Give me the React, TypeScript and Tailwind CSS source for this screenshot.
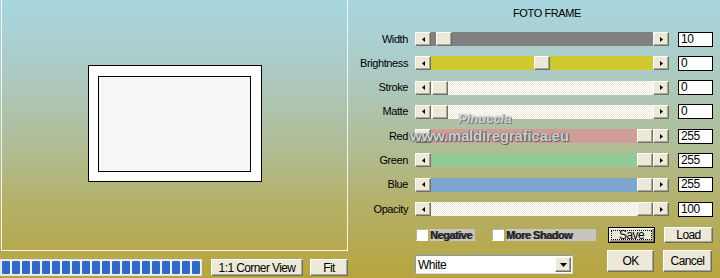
import React from 'react';

type Slider = {
  label: string;
  value: number;
  pos: number; // thumb offset in px along the 222px track
  track: string;
};

const sliders: Slider[] = [
  { label: 'Width', value: 10, pos: 5, track: 'bg-[#818181]' },
  { label: 'Brightness', value: 0, pos: 103, track: 'bg-[#cdc92f]' },
  { label: 'Stroke', value: 0, pos: 1, track: 'bg-[repeating-conic-gradient(#ece9d8_0_25%,#ffffff_0_50%)] bg-[length:2px_2px]' },
  { label: 'Matte', value: 0, pos: 1, track: 'bg-[repeating-conic-gradient(#ece9d8_0_25%,#ffffff_0_50%)] bg-[length:2px_2px]' },
  { label: 'Red', value: 255, pos: 206, track: 'bg-[#cf9c98]' },
  { label: 'Green', value: 255, pos: 206, track: 'bg-[#93c995]' },
  { label: 'Blue', value: 255, pos: 206, track: 'bg-[#7ca6cd]' },
  { label: 'Opacity', value: 100, pos: 206, track: 'bg-[repeating-conic-gradient(#ece9d8_0_25%,#ffffff_0_50%)] bg-[length:2px_2px]' },
];

const bevel =
  'bg-[#ece9d8] border border-t-white border-l-white border-r-[#716f64] border-b-[#716f64] shadow-[inset_-1px_-1px_0_#aca899]';

const ArrowBtn: React.FC<{ dir: 'left' | 'right' }> = ({ dir }) => (
  <div className={`w-[16px] h-[14px] shrink-0 flex items-center justify-center ${bevel}`}>
    <svg width="3" height="5" viewBox="0 0 3 5">
      {dir === 'left' ? <path d="M3 0 L0 2.5 L3 5 Z" fill="#000" /> : <path d="M0 0 L3 2.5 L0 5 Z" fill="#000" />}
    </svg>
  </div>
);

const Button: React.FC<{ label: string; className?: string; focused?: boolean }> = ({ label, className = '', focused }) => (
  <div
    className={`flex items-center justify-center text-[12px] tracking-[-0.6px] text-black ${
      focused
        ? 'bg-[#ece9d8] border border-black shadow-[inset_1px_1px_0_#ffffff,inset_-1px_-1px_0_#716f64,inset_-2px_-2px_0_#aca899] p-[3px]'
        : bevel
    } ${className}`}
  >
    {focused ? (
      <span className="w-full h-full flex items-center justify-center leading-none outline outline-1 outline-dotted outline-black">
        {label}
      </span>
    ) : (
      label
    )}
  </div>
);

const SliderRow: React.FC<{ s: Slider }> = ({ s }) => (
  <div className="flex items-center h-[14px]">
    <div className="w-[50px] text-right text-[11px] tracking-[-0.4px] leading-none text-black">{s.label}</div>
    <div className="ml-[7px] flex w-[254px]">
      <ArrowBtn dir="left" />
      <div className={`relative w-[222px] h-[14px] ${s.track}`}>
        <div className={`absolute top-0 w-[16px] h-[14px] ${bevel}`} style={{ left: s.pos }} />
      </div>
      <ArrowBtn dir="right" />
    </div>
    <div className="ml-[9px] w-[35px] h-[15px] bg-white border border-black pl-[2px] text-[12px] tracking-[-0.4px] leading-[13px] text-black">
      {s.value}
    </div>
  </div>
);

const Check: React.FC<{ label: string; w: string }> = ({ label, w }) => (
  <div className="flex items-center">
    <div className="w-[12px] h-[12px] bg-white border border-t-[#b9b6a6] border-l-[#b9b6a6] border-r-white border-b-white" />
    <div
      className={`ml-[2px] h-[12px] ${w} bg-[#c7c5bd] text-[11px] leading-[12px] font-bold tracking-[-0.5px] text-[#1e1e1e] [text-shadow:1px_0_0_#6b6b6b]`}
    >
      {label}
    </div>
  </div>
);

export default function App() {
  return (
    <div
      className="relative w-[720px] h-[278px] overflow-hidden flex bg-[linear-gradient(to_bottom,#a8d6e0_0%,#acc9c1_28%,#b0bd96_52%,#b4b068_74%,#b8a43e_100%)] select-none"
      style={{ fontFamily: '"Liberation Sans", Arial, sans-serif' }}
    >
      {/* preview side */}
      <div className="w-[348px] shrink-0 flex flex-col pl-[1px]">
        <div className="w-[347px] h-[251px] border-l border-r border-b border-[#f4f4ee] flex items-center justify-center">
          <div className="w-[174px] h-[117px] bg-white border border-black flex items-center justify-center -mt-[3px]">
            <div className="w-[153px] h-[96px] border border-black bg-[#f6f7f9]" />
          </div>
        </div>
        <div className="mt-[8px] -ml-[1px] flex items-start h-[17px]">
          <div className="w-[202px] h-[17px] bg-[#eef1f4] border border-[#dfe3e6] px-[1px] py-[1px] flex gap-[2px]">
            {Array.from({ length: 20 }).map((_, i) => (
              <div key={i} className="w-[8px] h-full bg-[#316ac5] rounded-[1px]" />
            ))}
          </div>
          <Button label="1:1 Corner View" className="ml-[9px] w-[92px] h-[17px] tracking-[-0.3px]" />
          <Button label="Fit" className="ml-[7px] w-[38px] h-[17px]" />
        </div>
      </div>

      {/* controls side */}
      <div className="flex-1 pl-[10px] flex flex-col">
        <div className="pt-[6px] h-[20px] text-center pl-[16px] text-[11px] leading-[14px] tracking-[-0.4px] text-black">
          FOTO FRAME
        </div>
        <div className="mt-[12px] flex flex-col gap-[10.3px]">
          {sliders.map((s) => (
            <SliderRow key={s.label} s={s} />
          ))}
        </div>
        <div className="mt-[11px] flex items-center h-[16px]">
          <div className="ml-[58px]">
            <Check label="Negative" w="w-[45px]" />
          </div>
          <div className="ml-[17px]">
            <Check label="More Shadow" w="w-[90px]" />
          </div>
          <Button label="Save" focused className="ml-[12px] w-[47px] h-[16px]" />
          <Button label="Load" className="ml-[9px] w-[49px] h-[16px]" />
        </div>
        <div className="mt-[7px] flex items-start">
          <div className="ml-[57px] mt-[5px] w-[158px] h-[19px] bg-white border border-t-[#7f9db9] border-l-[#7f9db9] border-r-[#dcdcdc] border-b-[#dcdcdc] flex items-center justify-between pl-[2px] pr-[1px]">
            <span className="text-[12px] tracking-[-0.5px] text-black leading-none">White</span>
            <div className={`w-[16px] h-[15px] flex items-center justify-center ${bevel}`}>
              <svg width="7" height="4" viewBox="0 0 7 4">
                <path d="M0 0 L7 0 L3.5 4 Z" fill="#000" />
              </svg>
            </div>
          </div>
          <Button label="OK" className="ml-[34px] w-[47px] h-[22px]" />
          <Button label="Cancel" className="ml-[9px] w-[49px] h-[22px]" />
        </div>
      </div>

      {/* watermark */}
      <div className="absolute left-[458px] top-[112px] text-[13px] font-bold italic leading-none text-[#eceeea]/80 [text-shadow:0_0_1px_#6a6a6a,1px_1px_0_#7a7a7a]">
        Pinuccia
      </div>
      <div className="absolute left-[410px] top-[128px] text-[15px] font-bold leading-none tracking-[-0.2px] text-[#f0f0ec]/80 [text-shadow:0_0_1px_#555555,1px_1px_0_#666666,-1px_0_0_#777777]">
        www.maldiregrafica.eu
      </div>
    </div>
  );
}
